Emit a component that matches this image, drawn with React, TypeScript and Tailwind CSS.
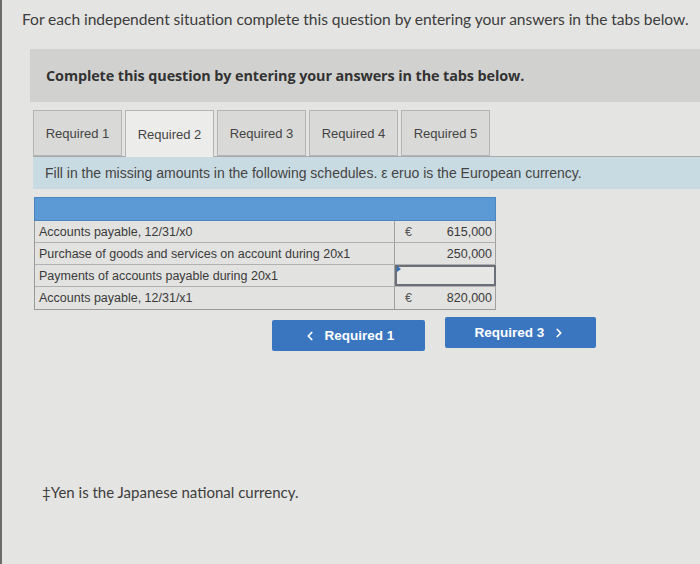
import React from "react";
import { ChevronLeft, ChevronRight } from "lucide-react";

const tabs = ["Required 1", "Required 2", "Required 3", "Required 4", "Required 5"];

const rows = [
  { label: "Accounts payable, 12/31/x0", cur: "€", amount: "615,000" },
  { label: "Purchase of goods and services on account during 20x1", cur: "", amount: "250,000" },
  { label: "Payments of accounts payable during 20x1", cur: "", amount: "", input: true },
  { label: "Accounts payable, 12/31/x1", cur: "€", amount: "820,000" },
];

export default function App() {
  return (
    <div className="w-[700px] h-[564px] overflow-hidden bg-[#e4e4e2] border-l-2 border-[#6b6b6b] text-[#3d3d3d]">
      <p className="pl-[20px] pt-[8px] text-[15.6px] font-['Lato',sans-serif] tracking-[-0.05px]">
        For each independent situation complete this question by entering your answers in the tabs below.
      </p>

      <div className="ml-[28px] mt-[18px] h-[53px] bg-[#d1d1cf] flex items-center pl-[16px]">
        <span className="text-[14.4px] font-bold font-['Open_Sans',sans-serif] text-[#333] tracking-[-0.1px]">
          Complete this question by entering your answers in the tabs below.
        </span>
      </div>

      <div className="ml-[31px] mt-[8px] flex items-end gap-[3px] border-b border-[#a8a8a8] font-['Liberation_Sans',sans-serif]">
        {tabs.map((t, i) => (
          <div
            key={t}
            className={
              i === 1
                ? "w-[89px] h-[47px] -mb-px bg-[#ececea] border border-b-0 border-[#b5b5b5] flex items-center justify-center text-[13px] text-[#444]"
                : "w-[89px] h-[46px] bg-[#d9d9d7] border border-[#b5b5b5] flex items-center justify-center text-[13px] text-[#444]"
            }
          >
            {t}
          </div>
        ))}
      </div>

      <div className="ml-[31px] h-[32px] bg-[#c9dbe2] flex items-center pl-[12px] font-['Liberation_Sans',sans-serif] text-[14px] text-[#444]">
        Fill in the missing amounts in the following schedules. ε eruo is the European currency.
      </div>

      <div className="ml-[32px] mt-[8px] w-[462px] font-['Liberation_Sans',sans-serif] text-[12.5px] text-[#3a3a3a]">
        <div className="h-[24px] bg-[#5b9ad4] border border-[#4d86bd]" />
        <div className="border-l border-b border-[#9a9a9a]">
          {rows.map((r) => (
            <div key={r.label} className="flex h-[22px] border-b border-[#b0b0b0] last:border-b-0 bg-[#e2e2e0]">
              <div className="flex-1 flex items-center pl-[4px] border-r border-[#a0a0a0]">{r.label}</div>
              {r.input ? (
                <div className="w-[101px] relative border-2 border-[#6a6f78] bg-[#e6e6e4]">
                  <span className="absolute left-0 top-[-1px] w-0 h-0 border-y-[3px] border-y-transparent border-l-[4px] border-l-[#2f6fb5]" />
                </div>
              ) : (
                <div className="w-[101px] flex items-center justify-between pl-[10px] pr-[3px] border-r border-[#a0a0a0]">
                  <span className="text-[#555]">{r.cur}</span>
                  <span>{r.amount}</span>
                </div>
              )}
            </div>
          ))}
        </div>
      </div>

      <div className="flex gap-[20px] ml-[270px] mt-[7px] items-start font-['Liberation_Sans',sans-serif] font-bold text-[13.5px] text-white">
        <button className="w-[153px] h-[31px] mt-[3px] bg-[#3a76c0] rounded-[2px] flex items-center justify-center gap-[8px]">
          <ChevronLeft size={14} strokeWidth={3} />
          <span>Required 1</span>
        </button>
        <button className="w-[151px] h-[31px] bg-[#3a76c0] rounded-[2px] flex items-center justify-center gap-[8px]">
          <span>Required 3</span>
          <ChevronRight size={14} strokeWidth={3} />
        </button>
      </div>

      <p className="pl-[40px] mt-[130px] text-[15px] font-['Lato',sans-serif] text-[#3d3d3d]">
        ‡Yen is the Japanese national currency.
      </p>
    </div>
  );
}
